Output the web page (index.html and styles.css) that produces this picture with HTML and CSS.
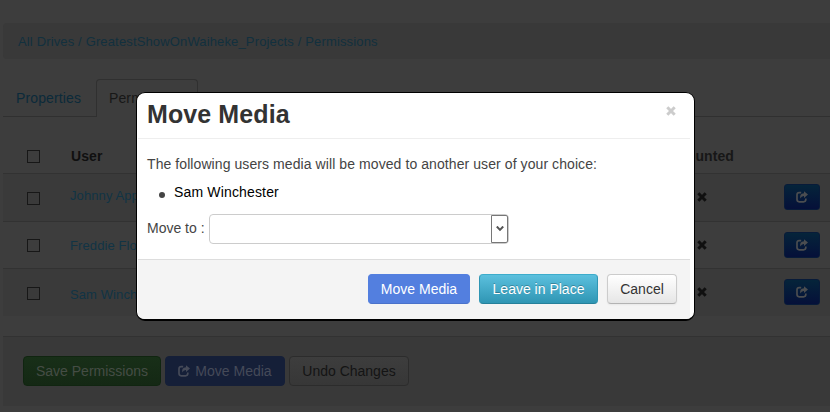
FILE: index.html
```html
<!DOCTYPE html>
<html lang="en">
<head>
<meta charset="utf-8">
<title>Permissions</title>
<link rel="stylesheet" href="styles.css">
</head>
<body>
<svg class="defs" width="0" height="0" aria-hidden="true">
  <symbol id="share" viewBox="0 0 12 12"><path d="M5.2 1.6H3.2Q1 1.6 1 3.8V8.6Q1 10.8 3.2 10.8H7.6Q9.8 10.8 9.8 8.6V7.6" fill="none" stroke="currentColor" stroke-width="1.7"/><path d="M8 .3 12 3.6 8 6.9V5.1Q5.4 4.900 4.400 7.600 3.100 2.500 8 2.200Z" fill="currentColor"/></symbol>
  <symbol id="cross" viewBox="0 0 10 10"><path d="M1.300 1.300 8.700 8.700M8.700 1.300 1.300 8.700" fill="none" stroke="currentColor" stroke-width="3"/></symbol>
</svg>
<main class="page">
  <nav class="breadcrumb"><a>All Drives</a> / <a>GreatestShowOnWaiheke_Projects</a> / <a>Permissions</a></nav>
  <div class="tabs"><a class="tab">Properties</a><span class="tab active">Permissions</span></div>
  <section class="table">
    <div class="row head"><i class="check"></i><b class="user">User</b><b class="mounted">Mounted</b></div>
    <div class="row odd first"><i class="check"></i><a class="user">Johnny Appleseed</a><svg class="cross"><use href="#cross"/></svg><button class="go"><svg><use href="#share"/></svg></button></div>
    <div class="row"><i class="check"></i><a class="user">Freddie Flower</a><svg class="cross"><use href="#cross"/></svg><button class="go"><svg><use href="#share"/></svg></button></div>
    <div class="row odd last"><i class="check"></i><a class="user">Sam Winchester</a><svg class="cross"><use href="#cross"/></svg><button class="go"><svg><use href="#share"/></svg></button></div>
  </section>
  <div class="actions">
    <button class="btn save">Save Permissions</button>
    <button class="btn move-dim"><svg><use href="#share"/></svg>Move Media</button>
    <button class="btn undo">Undo Changes</button>
  </div>
</main>
<div class="modal">
  <header><h3>Move Media</h3><svg class="close"><use href="#cross"/></svg></header>
  <div class="body">
    <p>The following users media will be moved to another user of your choice:</p>
    <ul><li>Sam Winchester</li></ul>
    <div class="field"><span>Move to :</span><div class="select"><span class="arrow"><svg viewBox="0 0 8 6"><path d="M.8.5 4 3.900 7.200.5" fill="none" stroke="#555" stroke-width="2"/></svg></span></div></div>
  </div>
  <footer>
    <button class="btn move">Move Media</button>
    <button class="btn leave">Leave in Place</button>
    <button class="btn cancel">Cancel</button>
  </footer>
</div>
</body>
</html>
```
FILE: styles.css
```css
* { box-sizing: border-box; }
body { margin: 0; height: 412px; overflow: hidden; background: #3d3d3d; font: 14px/20px "Liberation Sans", Arial, sans-serif; color: #171717; position: relative; }
.defs { position: absolute; }
.page { padding: 23px 0 0 3px; }
.breadcrumb { height: 36px; padding: 9px 15px; background: #393939; border-radius: 4px 0 0 4px; font-size: 13px; letter-spacing: .145px; color: #12303e; line-height: 19px; }
.breadcrumb a { color: #12303e; }
.tabs { display: flex; height: 38px; margin-top: 20px; border-bottom: 1px solid #303030; }
.tab { width: 93px; padding: 10px 0 0 13px; line-height: 18px; letter-spacing: .12px; color: #0b2a3a; }
.tab.active { width: 102px; height: 38px; padding: 9px 0 0 12px; border: 1px solid #303030; border-bottom: 0; border-radius: 4px 4px 0 0; background: #3d3d3d; color: #171717; }
.row { display: grid; grid-template-columns: 67px 607px 107px 36px; align-items: center; height: 47px; border-top: 1px solid #323232; font-size: 13px; letter-spacing: .1px; }
.row.first { height: 48px; }
.row.head { height: 56px; border: 0; padding-top: 21px; font-size: 14px; }
.row.odd { background: #3a3a3a; }
.row .user { color: #113445; padding-top: 1px; }
.row.first .user { padding: 0 0 3px; }
.row.last { height: 48px; }
.row.last .user { padding-top: 4px; }
.row.head .user { color: #101010; margin-left: 1px; padding: 0; }
.head .check { margin-top: 1px; }
.mounted { color: #171717; margin-left: -2px; }
.check { width: 13px; height: 13px; margin-top: 1px; margin-left: 24px; border: 1px solid #171717; }
.cross { width: 10px; height: 10px; margin-left: 20px; color: #101010; }
.first .cross, .last .cross, .first .go, .last .go { margin-bottom: 2px; }
.go { width: 36px; height: 26px; padding: 0; display: grid; place-items: center; border: 1px solid #081b39; border-radius: 3px; background: linear-gradient(#05243a, #051039); color: #4b4d50; }
.go svg { width: 12px; height: 12px; }
.actions { display: flex; gap: 4px; height: 70px; margin-top: 20px; padding: 19px 20px; border-top: 1px solid #323232; background: #393939; }
.btn { display: flex; align-items: center; justify-content: center; height: 30px; padding: 0; border: 1px solid; border-radius: 4px; font: 14px/20px "Liberation Sans", Arial, sans-serif; white-space: nowrap; }
.save { width: 138px; color: #454d45; border-color: #102510; background: linear-gradient(#182f18, #142814); }
.move-dim { width: 120px; gap: 5px; color: #454a58; background: #151f38; border-color: #151f38; }
.move-dim svg { width: 12px; height: 12px; }
.undo { width: 120px; color: #141414; background: linear-gradient(#3d3d3d, #373737); border-color: #2c2c2c; }
.modal { position: absolute; left: 136px; top: 92px; width: 559px; height: 229px; border: 1px solid #000; border-bottom-width: 2px; border-radius: 9px; background: #fff; color: #444; overflow: hidden; }
.modal header { display: flex; justify-content: space-between; height: 46px; margin: 0 4px 0 1px; padding: 0 14px 0 9px; border-bottom: 1px solid #eee; }
.modal h3 { margin: 0; font-size: 25px; line-height: 43px; letter-spacing: .1px; color: #333; }
.close { width: 10px; height: 10px; margin-top: 13px; color: #ccc; }
.body { height: 120px; padding: 15px 10px 0; }
.body p { margin: 0; line-height: 20px; letter-spacing: .08px; }
.body ul { margin: 9px 0 11px; padding: 0; list-style: none; }
.body li { display: flex; align-items: center; height: 20px; gap: 9px; padding-left: 12px; color: #000; line-height: 18px; letter-spacing: .16px; padding-bottom: 2px; }
.body li::before { content: ""; width: 6px; height: 6px; margin-top: 5px; border-radius: 50%; background: #444; }
.field { display: flex; align-items: center; gap: 5px; }
.field > span { width: 57px; padding-bottom: 2px; white-space: nowrap; }
.select { display: flex; justify-content: flex-end; width: 300px; height: 30px; border: 1px solid #ccc; border-radius: 4px; }
.arrow { display: grid; place-items: center; width: 17px; height: 28px; border: 1px solid #777; border-radius: 0 2px 2px 0; }
.arrow svg { width: 8px; height: 6px; }
.modal footer { display: flex; justify-content: flex-end; gap: 9px; height: 60px; margin: 0 4px 0 1px; padding: 14px 13px 0 0; background: #f4f4f4; border-top: 1px solid #ddd; }
.move { width: 102px; color: #fff; background: #537fdf; border-color: #537fdf #537fdf #4a72ca; }
.leave { width: 119px; color: #fff; background: linear-gradient(#5bc0de, #2f96b4); border-color: #3daccb #2f96b4 #25809a; text-shadow: 0 -1px 0 rgba(0,0,0,.25); }
.cancel { width: 70px; color: #333; background: linear-gradient(#fff, #e6e6e6); border-color: #ccc #ccc #b3b3b3; box-shadow: 0 1px 2px rgba(0,0,0,.05); }
```
